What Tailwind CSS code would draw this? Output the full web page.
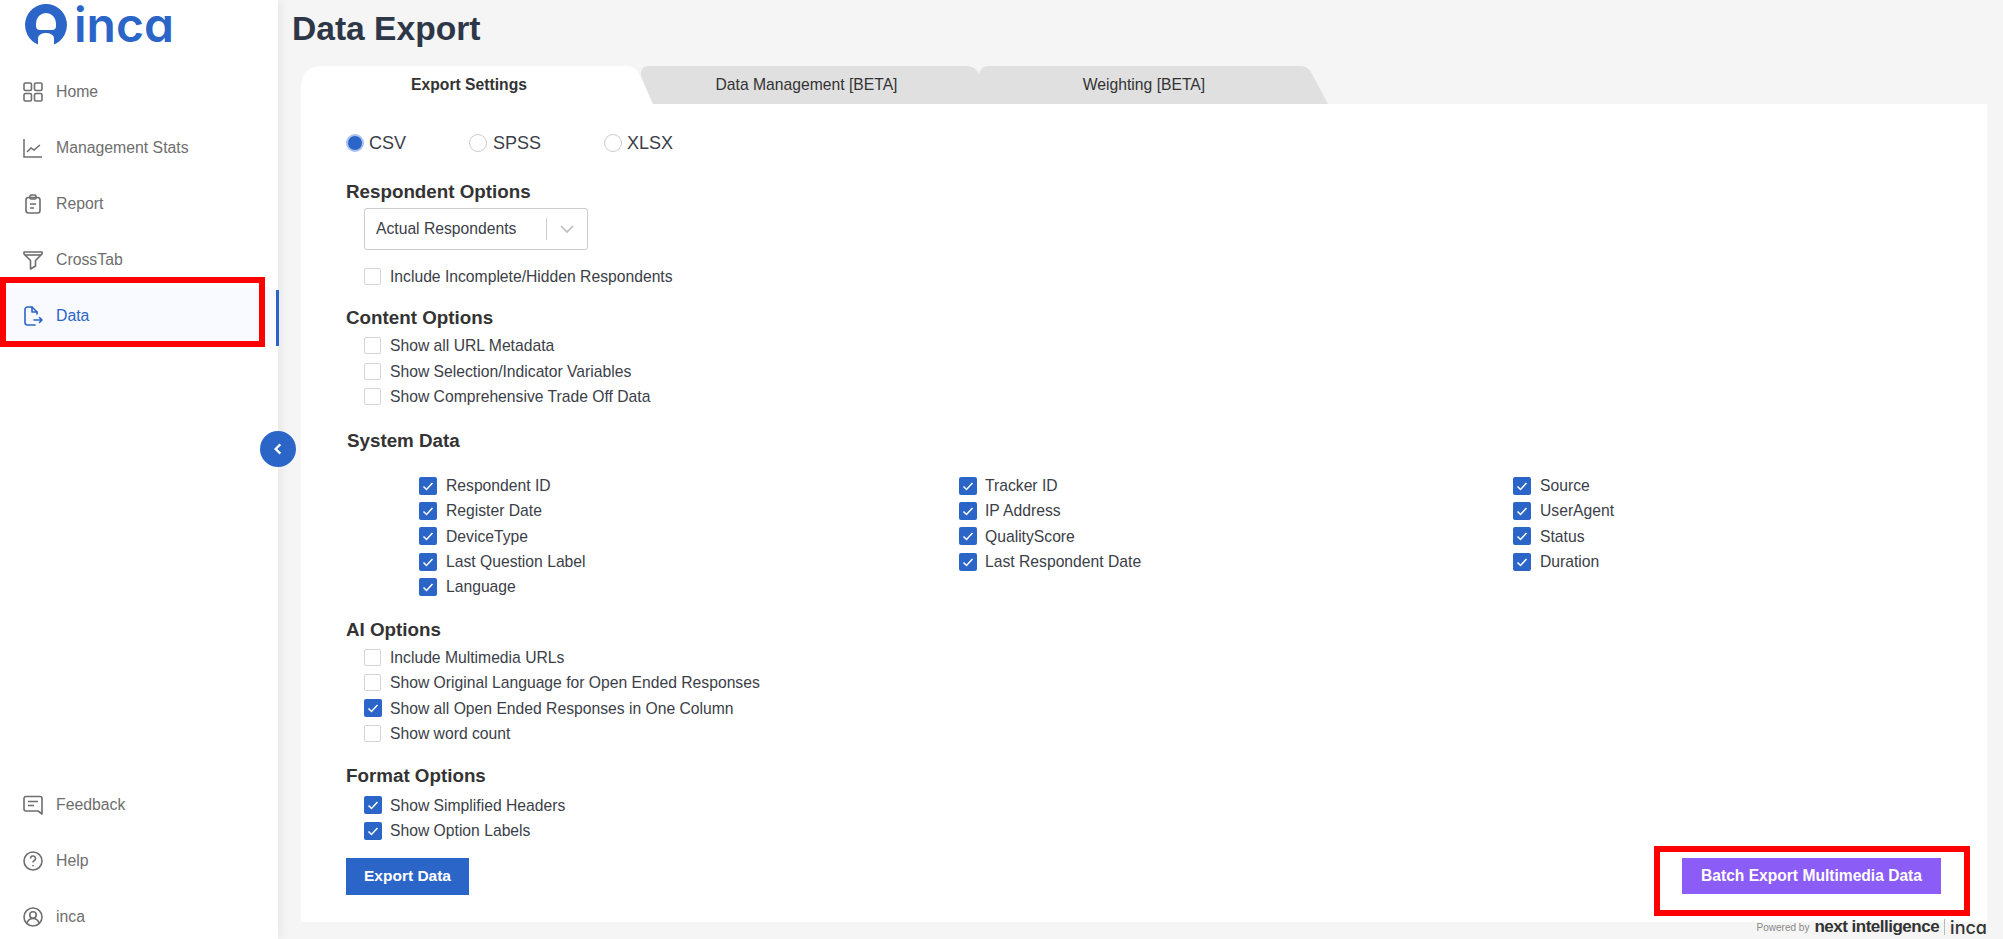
<!DOCTYPE html>
<html lang="en">
<head>
  <meta charset="UTF-8">
  <title>Data Export</title>
  <script src="https://cdn.jsdelivr.net/npm/@tailwindcss/browser@4"></script>
</head>
<body class="bg-[#f5f5f5] font-['Liberation_Sans',Arial,sans-serif] overflow-hidden">
  <div class="relative flex h-[939px] w-[2003px]">

    <!-- sidebar -->
    <aside class="relative z-10 flex w-[278px] flex-col justify-between bg-white text-[15.8px] text-[#6e6e6e] shadow-[4px_0_8px_rgba(0,0,0,0.05)]">
      <div>
        <div class="flex h-[64px] items-center pb-[15px] pl-[24px]">
          <svg width="44" height="44" viewBox="0 0 44 44"><path fill="#2b65c8" d="M22 1a21 21 0 0 0-8 40.400V35a8 5 0 0 1 16 0v6.400a21 21 0 0 0-8-40.400z"/><path fill="#fff" d="M12 20a10 10 0 0 1 20 0v3q0 4-4 4H16q-4 0-4-4z"/></svg>
          <span class="ml-[6px] font-['Inter',sans-serif] text-[48px] leading-none font-semibold text-[#2b65c8] [font-feature-settings:'cv11']">inca</span>
        </div>
        <nav>
          <a class="flex h-[56px] items-center pl-[23px]">
            <svg class="mr-[13px] h-[20px] w-[20px]" viewBox="0 0 20 20" fill="none" stroke="currentColor" stroke-width="1.6"><rect x="1" y="1" width="7.5" height="7.5" rx="1.5"/><rect x="11.5" y="1" width="7.5" height="7.5" rx="1.5"/><rect x="1" y="11.5" width="7.5" height="7.5" rx="1.5"/><rect x="11.5" y="11.5" width="7.5" height="7.5" rx="1.5"/></svg>
            Home
          </a>
          <a class="flex h-[56px] items-center pl-[23px]">
            <svg class="mr-[13px] h-[20px] w-[20px]" viewBox="0 0 20 20" fill="none" stroke="currentColor" stroke-width="1.5"><path d="M1 1v18h18M4 14l4-4 3 2 6-5"/></svg>
            Management Stats
          </a>
          <a class="flex h-[56px] items-center pl-[23px]">
            <svg class="mr-[13px] h-[20px] w-[20px]" viewBox="0 0 20 20" fill="none" stroke="currentColor" stroke-width="1.6"><rect x="3" y="3.5" width="14" height="15.5" rx="2.5"/><rect x="7" y="1" width="6" height="4" rx="1"/><path d="M7 10h6M7 14h4"/></svg>
            Report
          </a>
          <a class="flex h-[56px] items-center pl-[23px]">
            <svg class="mr-[13px] h-[20px] w-[20px]" viewBox="0 0 20 20" fill="none" stroke="currentColor" stroke-width="1.6" stroke-linejoin="round"><path d="M1 2h18v2l-6.500 6.500v5.500l-5 3v-8.500L1 4z"/><path d="M2 5h16"/></svg>
            CrossTab
          </a>
          <a class="ml-[6px] flex h-[56px] items-center bg-[#f8faff] pl-[17px] text-[#2b65c8]">
            <svg class="mr-[13px] h-[20px] w-[20px]" viewBox="0 0 20 20" fill="none" stroke="currentColor" stroke-width="1.6" stroke-linecap="round" stroke-linejoin="round"><path d="M14 8V6l-5-5H4.500A2.500 2.500 0 0 0 2 3.500v13A2.500 2.500 0 0 0 4.500 19H12"/><path d="M9 1v5h5M11 14h8M16.500 11.500 19 14l-2.500 2.500"/></svg>
            Data
          </a>
        </nav>
      </div>
      <div class="-mb-[6px]">
        <a class="flex h-[56px] items-center pl-[23px]">
          <svg class="mr-[13px] h-[20px] w-[20px]" viewBox="0 0 20 20" fill="none" stroke="currentColor" stroke-width="1.6" stroke-linejoin="round"><path d="M3 1.500h14a2 2 0 0 1 2 2V19l-4-3H3a2 2 0 0 1-2-2V3.500a2 2 0 0 1 2-2z"/><path d="M5 6.500h10M5 10.500h6"/></svg>
          Feedback
        </a>
        <a class="flex h-[56px] items-center pl-[23px]">
          <svg class="mr-[13px] h-[20px] w-[20px]" viewBox="0 0 20 20" fill="none" stroke="currentColor" stroke-width="1.6"><circle cx="10" cy="10" r="9"/><path d="M7.500 7.500a2.500 2.500 0 1 1 3.500 2.300c-.7.4-1 .8-1 1.700"/><path d="M10 14v1.200"/></svg>
          Help
        </a>
        <a class="flex h-[56px] items-center pl-[23px]">
          <svg class="mr-[13px] h-[20px] w-[20px]" viewBox="0 0 20 20" fill="none" stroke="currentColor" stroke-width="1.6"><circle cx="10" cy="10" r="9"/><circle cx="10" cy="8" r="3.200"/><path d="M4 16c1-3 3.500-4.500 6-4.500s5 1.500 6 4.500"/></svg>
          inca
        </a>
      </div>
    </aside>

    <!-- main -->
    <main class="flex-1 pr-[16px] pl-[14px]">
      <h1 class="h-[66px] pt-[8px] text-[33.6px] leading-[42px] font-bold text-[#2d3748]">Data Export</h1>

      <div class="ml-[9px]">
        <div class="flex h-[38px] text-[15.7px] text-[#333]">
          <div class="relative z-[3] flex w-[352px] items-center justify-center pr-[16px] font-bold">
            <svg class="absolute inset-0 -z-10 h-[39px] w-full" viewBox="0 0 352 39" fill="#fff"><path d="M0 39V22Q0 0 22 0H326Q334 0 338 8L352 39Z"/></svg>
            Export Settings
          </div>
          <div class="relative z-[2] -ml-[13px] flex w-[350px] items-center justify-center pr-[17px]">
            <svg class="absolute inset-0 -z-10 h-[38px] w-full" viewBox="0 0 350 38" fill="#e0e0e0"><path d="M13 38 1 10Q0 0 9 0H327Q335 0 339 8L350 38Z"/></svg>
            Data Management [BETA]
          </div>
          <div class="relative z-[1] -ml-[13px] flex w-[351px] items-center justify-center pr-[17px]">
            <svg class="absolute inset-0 -z-10 h-[38px] w-full" viewBox="0 0 351 38" fill="#e0e0e0"><path d="M0 38 2 9Q3 0 12 0H324Q331 0 335 8L351 38Z"/></svg>
            Weighting [BETA]
          </div>
        </div>

        <!-- card -->
        <div class="h-[818px] bg-white pr-[46px] pl-[45px] pt-[27px] text-[15.7px] text-[#3b4048]">
          <div class="flex h-[24px] items-center text-[18px]">
            <label class="flex w-[123px] items-center"><span class="mr-[5px] h-[18px] w-[18px] rounded-full border-2 border-[#a9c1ec] bg-[#2b65c8]"></span>CSV</label>
            <label class="flex w-[135px] items-center"><span class="mr-[6px] h-[18px] w-[18px] rounded-full border border-[#ccc]"></span>SPSS</label>
            <label class="flex items-center"><span class="mr-[5px] h-[18px] w-[18px] rounded-full border border-[#ccc]"></span>XLSX</label>
          </div>

          <h2 class="mt-[25px] h-[24px] text-[18.800px] leading-[24px] font-bold text-[#333]">Respondent Options</h2>
          <div class="mt-[4px] ml-[18px] flex h-[42px] w-[224px] items-center rounded-[3px] border border-[#ccc] pl-[11px]">
            <span class="w-[170px]">Actual Respondents</span>
            <span class="h-[22px] w-px bg-[#ccc]"></span>
            <svg class="ml-[13px] h-[14px] w-[14px]" viewBox="0 0 14 14" fill="none" stroke="#bbb" stroke-width="1.6"><path d="M1 4l6 6 6-6"/></svg>
          </div>
          <div class="mt-[14px] ml-[18px]">
            <label class="flex h-[25.400px] items-center"><span class="mr-[9px] h-[17px] w-[17px] rounded-[2px] border border-[#d4d4d4]"></span>Include Incomplete/Hidden Respondents</label>
          </div>

          <h2 class="mt-[16.600px] h-[24px] text-[18.800px] leading-[24px] font-bold text-[#333]">Content Options</h2>
          <div class="mt-[3.300px] ml-[18px]">
            <label class="flex h-[25.400px] items-center"><span class="mr-[9px] h-[17px] w-[17px] rounded-[2px] border border-[#d4d4d4]"></span>Show all URL Metadata</label>
            <label class="flex h-[25.400px] items-center"><span class="mr-[9px] h-[17px] w-[17px] rounded-[2px] border border-[#d4d4d4]"></span>Show Selection/Indicator Variables</label>
            <label class="flex h-[25.400px] items-center"><span class="mr-[9px] h-[17px] w-[17px] rounded-[2px] border border-[#d4d4d4]"></span>Show Comprehensive Trade Off Data</label>
          </div>

          <h2 class="mt-[19.500px] ml-px h-[24px] text-[18.800px] leading-[24px] font-bold text-[#333]">System Data</h2>
          <div class="mt-[20px] ml-[73px] grid grid-cols-[540px_554px_1fr]">
            <label class="flex h-[25.400px] items-center"><span class="mr-[9px] flex h-[18px] w-[18px] items-center justify-center rounded-[2px] bg-[#2b65c8]"><svg class="h-[12px] w-[12px]" viewBox="0 0 12 12" fill="none" stroke="#fff" stroke-width="1.500"><path d="M1.500 6.500 4.500 9.500 10.500 3"/></svg></span>Respondent ID</label>
            <label class="flex h-[25.400px] items-center"><span class="mr-[8px] flex h-[18px] w-[18px] items-center justify-center rounded-[2px] bg-[#2b65c8]"><svg class="h-[12px] w-[12px]" viewBox="0 0 12 12" fill="none" stroke="#fff" stroke-width="1.500"><path d="M1.500 6.500 4.500 9.500 10.500 3"/></svg></span>Tracker ID</label>
            <label class="flex h-[25.400px] items-center"><span class="mr-[9px] flex h-[18px] w-[18px] items-center justify-center rounded-[2px] bg-[#2b65c8]"><svg class="h-[12px] w-[12px]" viewBox="0 0 12 12" fill="none" stroke="#fff" stroke-width="1.500"><path d="M1.500 6.500 4.500 9.500 10.500 3"/></svg></span>Source</label>
            <label class="flex h-[25.400px] items-center"><span class="mr-[9px] flex h-[18px] w-[18px] items-center justify-center rounded-[2px] bg-[#2b65c8]"><svg class="h-[12px] w-[12px]" viewBox="0 0 12 12" fill="none" stroke="#fff" stroke-width="1.500"><path d="M1.500 6.500 4.500 9.500 10.500 3"/></svg></span>Register Date</label>
            <label class="flex h-[25.400px] items-center"><span class="mr-[8px] flex h-[18px] w-[18px] items-center justify-center rounded-[2px] bg-[#2b65c8]"><svg class="h-[12px] w-[12px]" viewBox="0 0 12 12" fill="none" stroke="#fff" stroke-width="1.500"><path d="M1.500 6.500 4.500 9.500 10.500 3"/></svg></span>IP Address</label>
            <label class="flex h-[25.400px] items-center"><span class="mr-[9px] flex h-[18px] w-[18px] items-center justify-center rounded-[2px] bg-[#2b65c8]"><svg class="h-[12px] w-[12px]" viewBox="0 0 12 12" fill="none" stroke="#fff" stroke-width="1.500"><path d="M1.500 6.500 4.500 9.500 10.500 3"/></svg></span>UserAgent</label>
            <label class="flex h-[25.400px] items-center"><span class="mr-[9px] flex h-[18px] w-[18px] items-center justify-center rounded-[2px] bg-[#2b65c8]"><svg class="h-[12px] w-[12px]" viewBox="0 0 12 12" fill="none" stroke="#fff" stroke-width="1.500"><path d="M1.500 6.500 4.500 9.500 10.500 3"/></svg></span>DeviceType</label>
            <label class="flex h-[25.400px] items-center"><span class="mr-[8px] flex h-[18px] w-[18px] items-center justify-center rounded-[2px] bg-[#2b65c8]"><svg class="h-[12px] w-[12px]" viewBox="0 0 12 12" fill="none" stroke="#fff" stroke-width="1.500"><path d="M1.500 6.500 4.500 9.500 10.500 3"/></svg></span>QualityScore</label>
            <label class="flex h-[25.400px] items-center"><span class="mr-[9px] flex h-[18px] w-[18px] items-center justify-center rounded-[2px] bg-[#2b65c8]"><svg class="h-[12px] w-[12px]" viewBox="0 0 12 12" fill="none" stroke="#fff" stroke-width="1.500"><path d="M1.500 6.500 4.500 9.500 10.500 3"/></svg></span>Status</label>
            <label class="flex h-[25.400px] items-center"><span class="mr-[9px] flex h-[18px] w-[18px] items-center justify-center rounded-[2px] bg-[#2b65c8]"><svg class="h-[12px] w-[12px]" viewBox="0 0 12 12" fill="none" stroke="#fff" stroke-width="1.500"><path d="M1.500 6.500 4.500 9.500 10.500 3"/></svg></span>Last Question Label</label>
            <label class="flex h-[25.400px] items-center"><span class="mr-[8px] flex h-[18px] w-[18px] items-center justify-center rounded-[2px] bg-[#2b65c8]"><svg class="h-[12px] w-[12px]" viewBox="0 0 12 12" fill="none" stroke="#fff" stroke-width="1.500"><path d="M1.500 6.500 4.500 9.500 10.500 3"/></svg></span>Last Respondent Date</label>
            <label class="flex h-[25.400px] items-center"><span class="mr-[9px] flex h-[18px] w-[18px] items-center justify-center rounded-[2px] bg-[#2b65c8]"><svg class="h-[12px] w-[12px]" viewBox="0 0 12 12" fill="none" stroke="#fff" stroke-width="1.500"><path d="M1.500 6.500 4.500 9.500 10.500 3"/></svg></span>Duration</label>
            <label class="flex h-[25.400px] items-center"><span class="mr-[9px] flex h-[18px] w-[18px] items-center justify-center rounded-[2px] bg-[#2b65c8]"><svg class="h-[12px] w-[12px]" viewBox="0 0 12 12" fill="none" stroke="#fff" stroke-width="1.500"><path d="M1.500 6.500 4.500 9.500 10.500 3"/></svg></span>Language</label>
          </div>

          <h2 class="mt-[17.700px] h-[24px] text-[18.800px] leading-[24px] font-bold text-[#333]">AI Options</h2>
          <div class="mt-[3.300px] ml-[18px]">
            <label class="flex h-[25.400px] items-center"><span class="mr-[9px] h-[17px] w-[17px] rounded-[2px] border border-[#d4d4d4]"></span>Include Multimedia URLs</label>
            <label class="flex h-[25.400px] items-center"><span class="mr-[9px] h-[17px] w-[17px] rounded-[2px] border border-[#d4d4d4]"></span>Show Original Language for Open Ended Responses</label>
            <label class="flex h-[25.400px] items-center"><span class="mr-[8px] flex h-[18px] w-[18px] items-center justify-center rounded-[2px] bg-[#2b65c8]"><svg class="h-[12px] w-[12px]" viewBox="0 0 12 12" fill="none" stroke="#fff" stroke-width="1.500"><path d="M1.500 6.500 4.500 9.500 10.500 3"/></svg></span>Show all Open Ended Responses in One Column</label>
            <label class="flex h-[25.400px] items-center"><span class="mr-[9px] h-[17px] w-[17px] rounded-[2px] border border-[#d4d4d4]"></span>Show word count</label>
          </div>

          <h2 class="mt-[18px] h-[24px] text-[18.800px] leading-[24px] font-bold text-[#333]">Format Options</h2>
          <div class="mt-[4.300px] ml-[18px]">
            <label class="flex h-[25.400px] items-center"><span class="mr-[8px] flex h-[18px] w-[18px] items-center justify-center rounded-[2px] bg-[#2b65c8]"><svg class="h-[12px] w-[12px]" viewBox="0 0 12 12" fill="none" stroke="#fff" stroke-width="1.500"><path d="M1.500 6.500 4.500 9.500 10.500 3"/></svg></span>Show Simplified Headers</label>
            <label class="flex h-[25.400px] items-center"><span class="mr-[8px] flex h-[18px] w-[18px] items-center justify-center rounded-[2px] bg-[#2b65c8]"><svg class="h-[12px] w-[12px]" viewBox="0 0 12 12" fill="none" stroke="#fff" stroke-width="1.500"><path d="M1.500 6.500 4.500 9.500 10.500 3"/></svg></span>Show Option Labels</label>
          </div>

          <div class="mt-[14px] flex items-center justify-between">
            <button class="h-[37px] w-[123px] bg-[#2b65c8] text-[15.500px] font-bold text-white">Export Data</button>
            <button class="h-[36px] w-[259px] bg-[#8b5cf6] text-[15.600px] font-bold text-white">Batch Export Multimedia Data</button>
          </div>
        </div>

        <!-- powered by -->
        <div class="flex h-[10px] items-center justify-end text-[#333]">
          <span class="mr-[5px] text-[10px] text-[#888]">Powered by</span>
          <span class="text-[17px] font-bold tracking-[-0.5px]">next intelligence</span>
          <span class="mx-[5px] h-[16px] w-px bg-[#bbb]"></span>
          <span class="font-['Inter',sans-serif] text-[18px] font-medium [font-feature-settings:'cv11']">inca</span>
        </div>
      </div>
    </main>

    <!-- overlays: active bar, collapse handle, red annotation boxes -->
    <span class="absolute top-[290px] left-[276px] z-20 h-[56px] w-[3px] bg-[#2b65c8]"></span>
    <button class="absolute top-[431px] left-[260px] z-20 flex h-[36px] w-[36px] items-center justify-center rounded-full bg-[#2b65c8]">
      <svg class="h-[14px] w-[14px]" viewBox="0 0 12 12" fill="none" stroke="#fff" stroke-width="2"><path d="M8 2 4 6l4 4"/></svg>
    </button>
    <div class="absolute top-[277px] left-0 z-30 h-[70px] w-[265px] border-[6px] border-[#ff0000]"></div>
    <div class="absolute top-[846px] left-[1654px] z-30 h-[70px] w-[316px] border-[6px] border-[#ff0000]"></div>
  </div>
</body>
</html>
